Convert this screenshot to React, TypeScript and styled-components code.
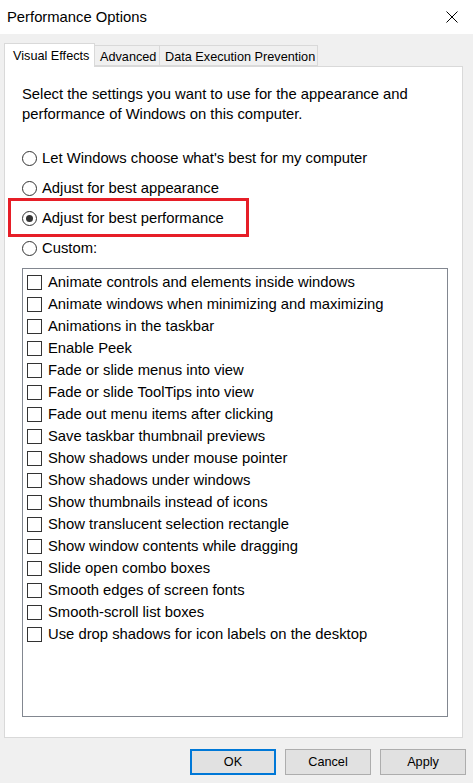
import styled, { createGlobalStyle } from "styled-components"

const Global = createGlobalStyle`
  html, body {
    margin            : 0       ;
    padding           : 0       ;
    background        : #f0f0f0 ;
  }
  body {
    font-family       : "Liberation Sans", Arial, sans-serif;
    font-size         : 14.8px  ;
    color             : #000    ;
  }
`

const Window = styled.div`
  width               : 473px   ;
  height              : 783px   ;
  display             : flex    ;
  flex-direction      : column  ;
  background          : #f0f0f0 ;
  overflow            : hidden  ;
`

const Title_bar = styled.div`
  height              : 34px    ;
  flex                : none    ;
  background          : #ffffff ;
  display             : flex    ;
  align-items         : center  ;
  justify-content     : space-between;
  padding             : 0 15px 0 7px;
  font-size           : 14.8px  ;
`

const Body = styled.div`
  flex                : 1       ;
  display             : flex    ;
  flex-direction      : column  ;
  padding             : 9px 7px 8px 4px;
`

const Tab_strip = styled.div`
  display             : flex    ;
  align-items         : flex-end;
  height              : 23px    ;
  margin-right        : 3px     ;
  position            : relative;
  z-index             : 1       ;
  font-size           : 12.7px  ;
`

const Tab = styled.div<{ $w: number; $active?: boolean }>`
  width               : ${p => p.$w}px;
  height              : ${p => (p.$active ? 24 : 21)}px;
  margin-bottom       : ${p => (p.$active ? -1 : 0)}px;
  box-sizing          : border-box;
  background          : ${p => (p.$active ? "#ffffff" : "#f0f0f0")};
  border              : 1px solid #d9d9d9;
  border-bottom       : ${p => (p.$active ? "none" : "1px solid #d9d9d9")};
  margin-left         : ${p => (p.$active ? 0 : -1)}px;
  display             : flex    ;
  align-items         : center  ;
  padding-left        : ${p => (p.$active ? 8 : 5)}px;
  padding-top         : ${p => (p.$active ? 0 : 2)}px;
  white-space         : nowrap  ;
`

const Panel = styled.div`
  flex                : 1       ;
  display             : flex    ;
  flex-direction      : column  ;
  background          : #ffffff ;
  border              : 1px solid #d9d9d9;
  margin-right        : 3px     ;
  padding             : 17px 14px 20px 17px;
`

const Intro = styled.p`
  margin              : 0 0 19px 0;
  line-height         : 20px    ;
`

const Radio_row = styled.label`
  position            : relative;
  height              : 30px    ;
  display             : flex    ;
  align-items         : center  ;
  gap                 : 5px     ;
`

const Radio = styled.span<{ $on?: boolean }>`
  width               : 15px    ;
  height              : 15px    ;
  box-sizing          : border-box;
  border              : 1px solid #333333;
  border-radius       : 50%     ;
  display             : flex    ;
  align-items         : center  ;
  justify-content     : center  ;
  flex                : none    ;

  &::after{
    content           : "";
    width             : 7px     ;
    height            : 7px     ;
    border-radius     : 50%     ;
    background        : ${p => (p.$on ? "#333333" : "transparent")};
  }
`

const Highlight = styled.span`
  position            : absolute;
  left                : -14px   ;
  top                 : -5px    ;
  width               : 241px   ;
  height              : 39px    ;
  box-sizing          : border-box;
  border              : 3px solid #e61e27;
  pointer-events      : none    ;
`

const List_box = styled.div`
  flex                : 1       ;
  margin-top          : 5px     ;
  border              : 1px solid #828790;
  padding             : 2px 4px 1px;
  display             : flex    ;
  flex-direction      : column  ;
`

const Check_row = styled.label`
  height              : 22px    ;
  display             : flex    ;
  align-items         : center  ;
  gap                 : 6px     ;
`

const Check_box = styled.span`
  width               : 15px    ;
  height              : 15px    ;
  box-sizing          : border-box;
  border              : 1px solid #333333;
  background          : #ffffff ;
  flex                : none    ;
`

const Button_bar = styled.div`
  display             : flex    ;
  justify-content     : flex-end;
  gap                 : 9px     ;
  margin-top          : 11px    ;
`

const Button = styled.button<{ $default?: boolean }>`
  width               : 86px    ;
  height              : 26px    ;
  box-sizing          : border-box;
  background          : #e1e1e1 ;
  border              : ${p => (p.$default ? "2px solid #0078d7" : "1px solid #adadad")};
  font-family         : inherit ;
  font-size           : 12.7px  ;
  color               : #000    ;
  padding             : 0       ;
`

const options = [
  "Animate controls and elements inside windows",
  "Animate windows when minimizing and maximizing",
  "Animations in the taskbar",
  "Enable Peek",
  "Fade or slide menus into view",
  "Fade or slide ToolTips into view",
  "Fade out menu items after clicking",
  "Save taskbar thumbnail previews",
  "Show shadows under mouse pointer",
  "Show shadows under windows",
  "Show thumbnails instead of icons",
  "Show translucent selection rectangle",
  "Show window contents while dragging",
  "Slide open combo boxes",
  "Smooth edges of screen fonts",
  "Smooth-scroll list boxes",
  "Use drop shadows for icon labels on the desktop",
]

const radios = [
  "Let Windows choose what's best for my computer",
  "Adjust for best appearance",
  "Adjust for best performance",
  "Custom:",
]

function App(){
  return <Window>
    <Global/>

    <Title_bar>
      <span>Performance Options</span>
      <svg width="12" height="12" viewBox="0 0 12 12">
        <path d="M0.5 0.5 L11.5 11.5 M11.5 0.5 L0.5 11.5" stroke="#000" strokeWidth="1" />
      </svg>
    </Title_bar>

    <Body>
      <Tab_strip>
        <Tab $w={91} $active>Visual Effects</Tab>
        <Tab $w={66}>Advanced</Tab>
        <Tab $w={159}>Data Execution Prevention</Tab>
      </Tab_strip>

      <Panel>
        <Intro>
          Select the settings you want to use for the appearance and<br/>
          performance of Windows on this computer.
        </Intro>

        {radios.map((r, i) =>
          <Radio_row key={r}>
            <Radio $on={i === 2}/>
            {r}
            {i === 2 && <Highlight/>}
          </Radio_row>
        )}

        <List_box>
          {options.map(o =>
            <Check_row key={o}>
              <Check_box/>
              {o}
            </Check_row>
          )}
        </List_box>
      </Panel>

      <Button_bar>
        <Button $default>OK</Button>
        <Button>Cancel</Button>
        <Button>Apply</Button>
      </Button_bar>
    </Body>
  </Window>
}

export default App
